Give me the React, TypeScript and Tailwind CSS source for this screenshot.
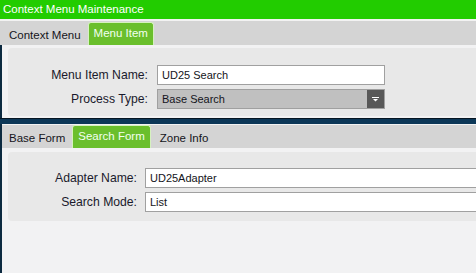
import React from "react";

const Tab = ({ label, active, ml = "ml-[3px]" }: { label: string; active?: boolean; ml?: string }) =>
  active ? (
    <div className={`${ml} h-[23px] rounded-t-[3px] border border-b-0 border-[#d6f1c0] bg-[#6abf2c] px-[5px] pt-[3px] text-[11.5px] leading-[14px] text-[#f2fff0] whitespace-nowrap`}>
      {label}
    </div>
  ) : (
    <div className={`${ml} h-[23px] pl-[6px] pr-[4px] pt-[6px] text-[11.5px] leading-[14px] text-[#141420] whitespace-nowrap`}>
      {label}
    </div>
  );

const Field = ({ value }: { value: string }) => (
  <div className="h-[20px] border border-[#a0a0a0] bg-white pl-[4px] text-[11px] leading-[18px] text-[#141420] whitespace-nowrap">
    {value}
  </div>
);

const Select = ({ value }: { value: string }) => (
  <div className="flex h-[20px] border border-[#a0a0a0] bg-[#c0c0c0] text-[11px] leading-[18px] text-[#141420]">
    <div className="flex-1 pl-[4px] whitespace-nowrap">{value}</div>
    <div className="flex w-[17px] items-center justify-center bg-[#585858]">
      <svg width="7" height="5" viewBox="0 0 7 5">
        <rect x="0" y="0" width="7" height="1" fill="#fff" />
        <polygon points="1,2 6,2 3.5,4.5" fill="#fff" />
      </svg>
    </div>
  </div>
);

const Label = ({ text }: { text: string }) => (
  <div className="h-[20px] text-right text-[12.2px] leading-[20px] text-[#1a1a2c] whitespace-nowrap">{text}</div>
);

export default function App() {
  return (
    <div className="flex h-[273px] w-[476px] flex-col overflow-hidden bg-[#f2f2f3] font-['Liberation_Sans',Arial,sans-serif]">
      {/* Title bar */}
      <div className="h-[19px] shrink-0 bg-[#22cc00] pl-[3px] text-[11.5px] leading-[19px] text-white">
        Context Menu Maintenance
      </div>

      {/* Top tabs */}
      <div className="flex h-[26px] shrink-0 items-end border-t-2 border-[#f2f2f2] bg-[#d4d4d4]">
        <Tab label="Context Menu" />
        <Tab label="Menu Item" active />
      </div>

      {/* Top content */}
      <div className="h-[73px] shrink-0 border-l-2 border-[#0c2a40] pl-[6px] pt-[3px]">
        <div className="h-[68px] rounded-l-[4px] bg-[#e8e8e8] pt-[17px]">
          <div className="grid grid-cols-[140px_228px] gap-x-[9px] gap-y-[4px]">
            <Label text="Menu Item Name:" />
            <Field value="UD25 Search" />
            <Label text="Process Type:" />
            <Select value="Base Search" />
          </div>
        </div>
      </div>

      {/* Separator band */}
      <div className="h-[6px] shrink-0 border-t border-[#061522] bg-[#0c3757]" />

      {/* Bottom section */}
      <div className="flex flex-1 flex-col border-l-2 border-[#0c2a40]">
        <div className="flex h-[24px] shrink-0 items-end border-t border-[#f2f2f2] bg-[#d4d4d4]">
          <Tab label="Base Form" ml="ml-[1px]" />
          <Tab label="Search Form" active />
          <Tab label="Zone Info" />
        </div>
        <div className="pl-[6px] pt-[4px]">
          <div className="h-[69px] rounded-l-[4px] bg-[#e8e8e8] pt-[16px]">
            <div className="grid grid-cols-[129px_360px] gap-x-[8px] gap-y-[4px]">
              <Label text="Adapter Name:" />
              <Field value="UD25Adapter" />
              <Label text="Search Mode:" />
              <Field value="List" />
            </div>
          </div>
        </div>
      </div>
    </div>
  );
}
